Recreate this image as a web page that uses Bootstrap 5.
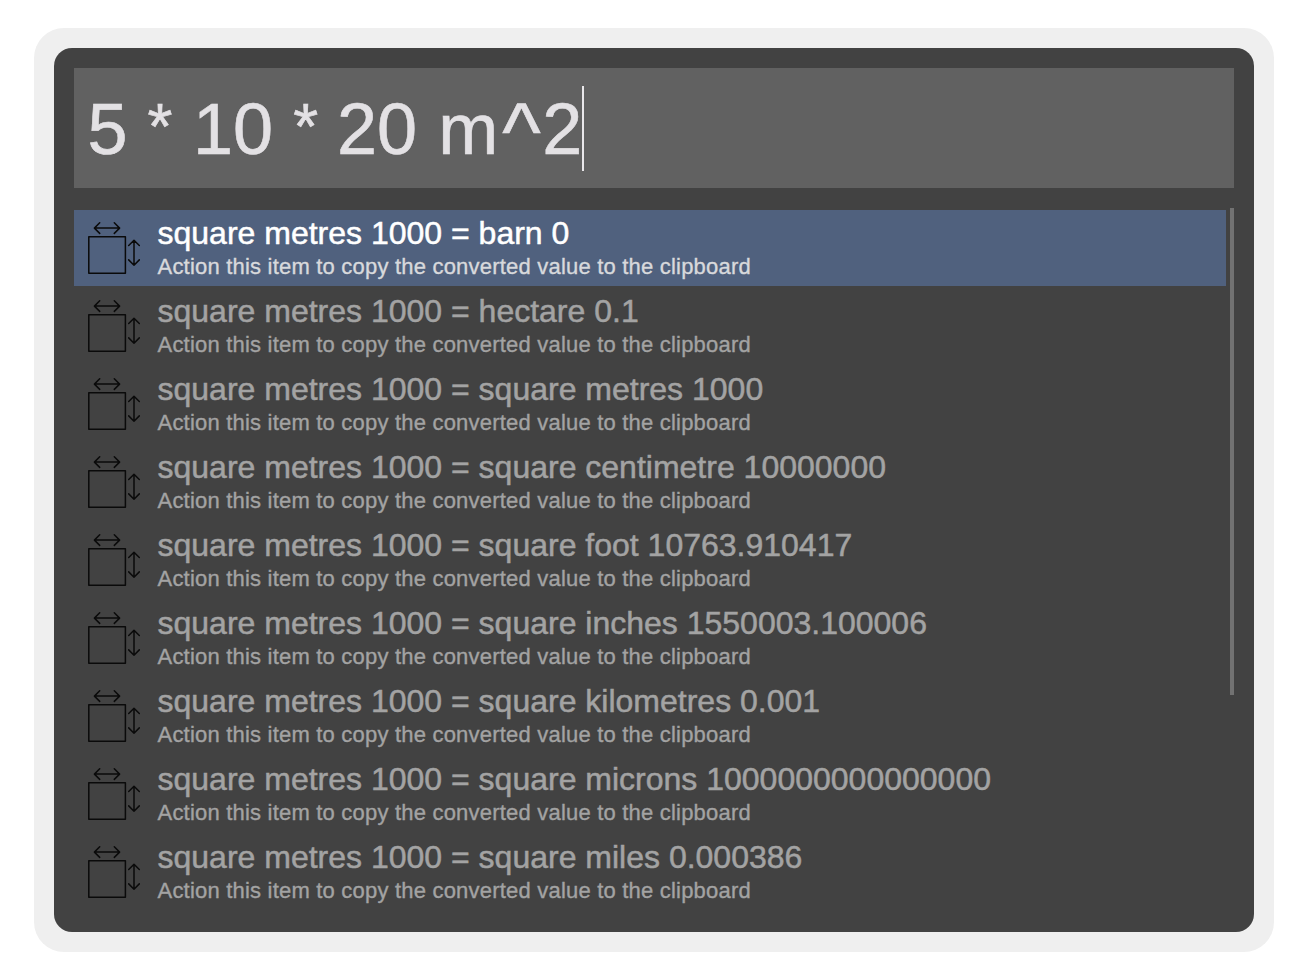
<!DOCTYPE html>
<html lang="en">
<head>
<meta charset="utf-8">
<title>Unit converter</title>
<link href="https://cdn.jsdelivr.net/npm/bootstrap@5.3.0/dist/css/bootstrap.min.css" rel="stylesheet">
<style>
body{background:#fff;font-family:"Liberation Sans",Arial,sans-serif;width:1300px;height:962px;overflow:hidden;padding:28px 26px 0 34px}
.frame{background:#efefef;border-radius:30px;padding:20px;height:924px}
.panel{background:#424242;border-radius:18px;padding:20px;height:884px}
.query{background:#616161;height:120px;padding:2px 12px 0 13.5px;color:#e3e1e4;font-size:72px;line-height:85px;white-space:pre;-webkit-text-stroke:.6px}
.query .star{font-size:64px;line-height:0;vertical-align:5px;letter-spacing:.6px}
.query .second{letter-spacing:-1px}
.query .em{letter-spacing:4px}
.query .hat{font-size:82px;line-height:0;letter-spacing:1.6px;vertical-align:-6px}
.query .shift{letter-spacing:1px}
.caret{width:2px;height:85px;background:#e9e7ea;margin-top:-1px}
.results{margin-top:20px;height:704px}
.rows{width:1152px;padding-top:2px;gap:2px}
.result{height:76px;padding-left:12px;color:#a3a3a3}
.result.chosen{background:#50617e;color:#fff}
.result svg{width:56px;height:76px;flex:none}
.texts{padding:5px 0 0 15.5px;white-space:pre}
.ttl{font-size:32px;line-height:36px;-webkit-text-stroke:.5px}
.sub{font-size:22px;line-height:32px;letter-spacing:.205px;-webkit-text-stroke:.35px}
.chosen .sub{color:#d8d9dc}
.thumb{width:4px;height:487px;background:#727272}
</style>
</head>
<body>
<svg class="d-none"><symbol id="area" viewBox="0 0 56 76"><g fill="none" stroke="#0a0a0a" stroke-width="1.5" stroke-linecap="round" stroke-linejoin="round"><rect x="2.8" y="26.7" width="36.6" height="36.5"/><path d="M8.6 18.1h24.8M13.7 12.8l-5.3 5.3 5.3 5.3M28.3 12.8l5.3 5.3-5.3 5.3M48 30.4v24.8M42.7 35.5l5.3-5.3 5.3 5.3M42.7 49.9l5.3 5.3 5.3-5.3"/></g></symbol></svg>
<div class="frame"><div class="panel">
<div class="query d-flex align-items-center"><span>5 <span class="star">*</span> 10 <span class="second star">*</span> 20<span class="shift"> </span><span class="em">m</span><span class="hat">^</span>2</span><span class="caret"></span></div>
<div class="results d-flex justify-content-between"><div class="rows d-flex flex-column" id="rows"></div><div class="thumb"></div></div>
</div></div>
<script>
const values = ["barn 0","hectare 0.1","square metres 1000","square centimetre 10000000","square foot 10763.910417","square inches 1550003.100006","square kilometres 0.001","square microns 1000000000000000","square miles 0.000386"];
document.getElementById("rows").innerHTML = values.map((v,i)=>`<div class="result d-flex${i?"":" chosen"}"><svg><use href="#area"/></svg><div class="texts"><div class="ttl">square metres 1000 = ${v}</div><div class="sub">Action this item to copy the converted value to the clipboard</div></div></div>`).join("");
</script>
<script src="https://cdn.jsdelivr.net/npm/bootstrap@5.3.0/dist/js/bootstrap.bundle.min.js"></script>
</body>
</html>
